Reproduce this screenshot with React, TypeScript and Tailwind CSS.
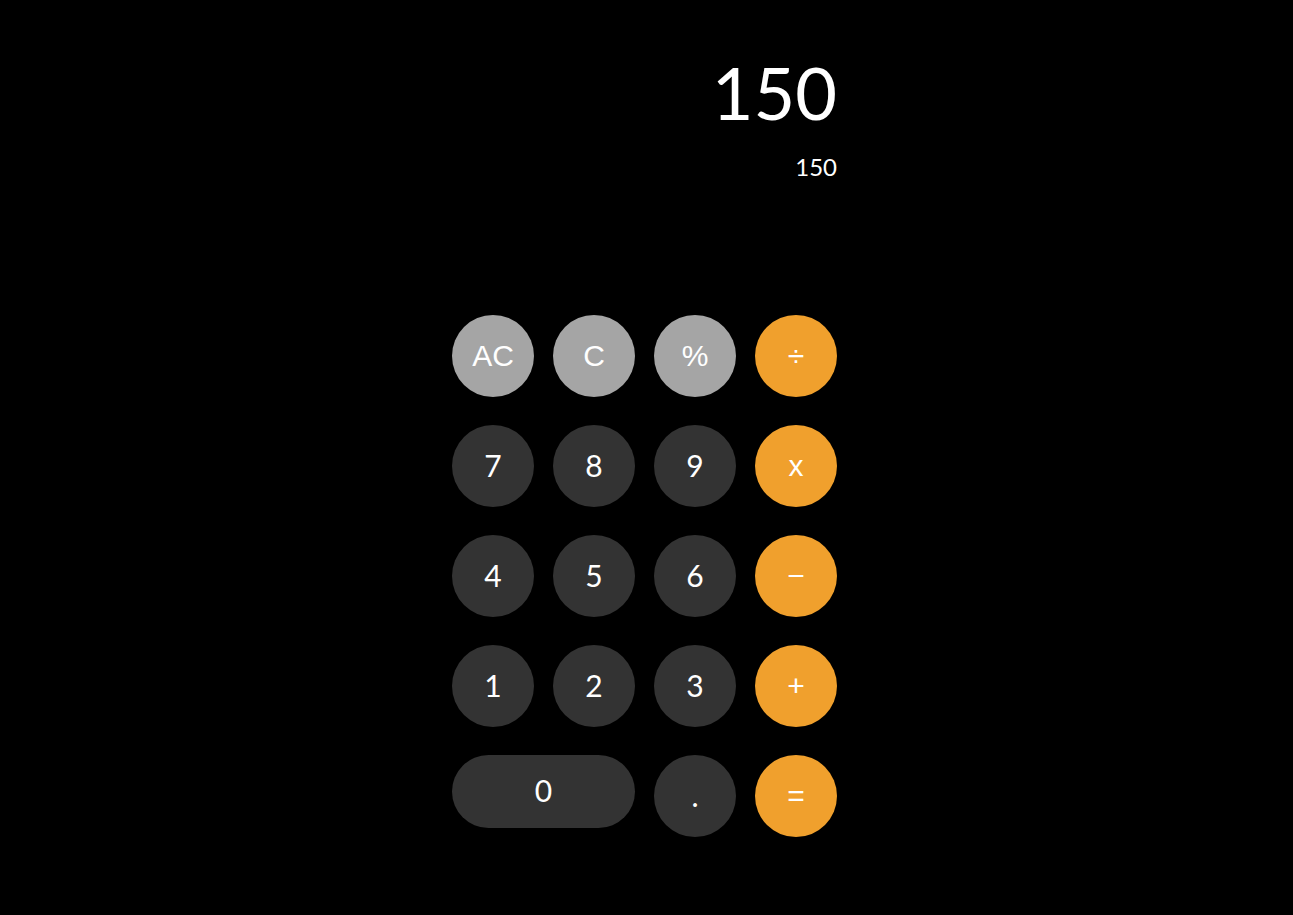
import { useState } from 'react';

type Key = {
  label: string;
  kind: 'fn' | 'num' | 'op';
  wide?: boolean;
};

const keys: Key[] = [
  { label: 'AC', kind: 'fn' },
  { label: 'C', kind: 'fn' },
  { label: '%', kind: 'fn' },
  { label: '÷', kind: 'op' },
  { label: '7', kind: 'num' },
  { label: '8', kind: 'num' },
  { label: '9', kind: 'num' },
  { label: 'x', kind: 'op' },
  { label: '4', kind: 'num' },
  { label: '5', kind: 'num' },
  { label: '6', kind: 'num' },
  { label: '−', kind: 'op' },
  { label: '1', kind: 'num' },
  { label: '2', kind: 'num' },
  { label: '3', kind: 'num' },
  { label: '+', kind: 'op' },
  { label: '0', kind: 'num', wide: true },
  { label: '.', kind: 'num' },
  { label: '=', kind: 'op' },
];

// digits use Lato (footed 1), the symbol keys an Arial-like face
const kindClass = {
  fn: "bg-[#a5a5a5] hover:bg-[#b8b8b8] font-['Liberation_Sans',Arial,sans-serif]",
  num: "bg-[#333333] hover:bg-[#444444] font-['Lato','Liberation_Sans',sans-serif] pb-[3px]",
  op: "bg-[#f0a02d] hover:bg-[#f3b457] font-['Liberation_Sans',Arial,sans-serif]",
};

export default function App() {
  const [display] = useState('150');
  const [result] = useState('150');

  return (
    <div className="min-h-screen bg-black text-white flex justify-center pr-[4px] font-['Lato','Liberation_Sans',sans-serif]">
      <div className="w-[385px]">
        {/* Display */}
        <div className="mt-[56px] text-right text-[72px] leading-[72px]">{display}</div>
        <div className="mt-[27px] text-right text-[24px] leading-[24px]">{result}</div>

        {/* Keypad */}
        <div className="mt-[136px] grid grid-cols-[repeat(4,82px)] auto-rows-[82px] gap-x-[19px] gap-y-[28px] items-start">
          {keys.map((k) => (
            <button
              key={k.label}
              className={`${kindClass[k.kind]} text-white text-[30px] leading-none flex items-center justify-center rounded-full transition-colors ${
                k.wide ? 'col-span-2 h-[73px]' : 'h-[82px] w-[82px]'
              }`}
            >
              {k.label}
            </button>
          ))}
        </div>
      </div>
    </div>
  );
}
